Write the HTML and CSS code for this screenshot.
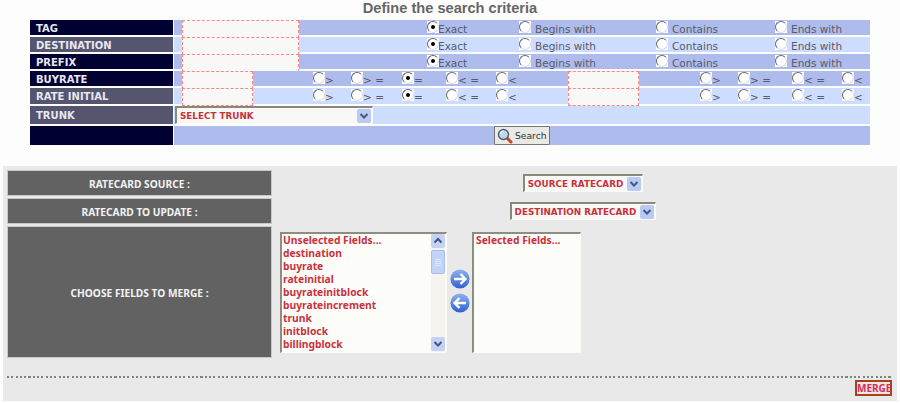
FILE: index.html
```html
<!DOCTYPE html>
<html lang="en">
<head>
<meta charset="utf-8">
<title>Define the search criteria</title>
<link rel="stylesheet" href="styles.css">
</head>
<body>
<h1 class="title">Define the search criteria</h1>
<div class="search">
  <div class="lab dark">TAG</div>
  <div class="val blue text-row">
    <input class="field wide" type="text">
    <label class="opt tight"><span class="radio on"></span>Exact</label>
    <label class="opt"><span class="radio"></span>Begins with</label>
    <label class="opt"><span class="radio"></span>Contains</label>
    <label class="opt"><span class="radio"></span>Ends with</label>
  </div>
  <div class="lab mid">DESTINATION</div>
  <div class="val pale text-row">
    <input class="field wide" type="text">
    <label class="opt tight"><span class="radio on"></span>Exact</label>
    <label class="opt"><span class="radio"></span>Begins with</label>
    <label class="opt"><span class="radio"></span>Contains</label>
    <label class="opt"><span class="radio"></span>Ends with</label>
  </div>
  <div class="lab dark">PREFIX</div>
  <div class="val blue text-row">
    <input class="field wide" type="text">
    <label class="opt tight"><span class="radio on"></span>Exact</label>
    <label class="opt"><span class="radio"></span>Begins with</label>
    <label class="opt"><span class="radio"></span>Contains</label>
    <label class="opt"><span class="radio"></span>Ends with</label>
  </div>
  <div class="lab dark">BUYRATE</div>
  <div class="val blue rate-row">
    <input class="field short" type="text">
    <label class="opt cmp"><span class="radio"></span>&gt;</label>
    <label class="opt cmp"><span class="radio"></span>&gt; =</label>
    <label class="opt cmp"><span class="radio on"></span>=</label>
    <label class="opt cmp"><span class="radio"></span>&lt; =</label>
    <label class="opt cmp"><span class="radio"></span>&lt;</label>
    <input class="field short" type="text">
    <label class="opt cmp"><span class="radio"></span>&gt;</label>
    <label class="opt cmp"><span class="radio"></span>&gt; =</label>
    <label class="opt cmp"><span class="radio"></span>&lt; =</label>
    <label class="opt cmp"><span class="radio"></span>&lt;</label>
  </div>
  <div class="lab mid">RATE INITIAL</div>
  <div class="val pale rate-row">
    <input class="field short" type="text">
    <label class="opt cmp"><span class="radio"></span>&gt;</label>
    <label class="opt cmp"><span class="radio"></span>&gt; =</label>
    <label class="opt cmp"><span class="radio on"></span>=</label>
    <label class="opt cmp"><span class="radio"></span>&lt; =</label>
    <label class="opt cmp"><span class="radio"></span>&lt;</label>
    <input class="field short" type="text">
    <label class="opt cmp"><span class="radio"></span>&gt;</label>
    <label class="opt cmp"><span class="radio"></span>&gt; =</label>
    <label class="opt cmp"><span class="radio"></span>&lt; =</label>
    <label class="opt cmp"><span class="radio"></span>&lt;</label>
  </div>
  <div class="lab mid">TRUNK</div>
  <div class="val pale trunk-row">
    <div class="select trunk"><span>SELECT TRUNK</span>
      <svg class="drop" viewBox="0 0 14 14"><rect width="14" height="14" rx="2" fill="#b9caf3"/><path d="M3.5 5 7 8.5 10.5 5" fill="none" stroke="#47577f" stroke-width="2"/></svg>
    </div>
  </div>
  <div class="lab dark"></div>
  <div class="val blue action-row">
    <button class="search-btn" type="button">
      <svg class="lens" viewBox="0 0 16 16"><path d="M9.5 9.5 14 14" stroke="#c8481c" stroke-width="3" stroke-linecap="round"/><circle cx="6.5" cy="6.5" r="5" fill="#bcd8ee" stroke="#4c5c68" stroke-width="1.4"/><path d="M3.5 6a3 3 0 0 1 3-3" fill="none" stroke="#fff" stroke-width="1.2"/></svg>
      Search
    </button>
  </div>
</div>

<div class="merge-panel">
  <div class="merge-grid">
    <div class="side">RATECARD SOURCE :</div>
    <div class="pick">
      <div class="select"><span>SOURCE RATECARD</span>
        <svg class="drop" viewBox="0 0 14 14"><rect width="14" height="14" rx="2" fill="#b9caf3"/><path d="M3.5 5 7 8.5 10.5 5" fill="none" stroke="#47577f" stroke-width="2"/></svg>
      </div>
    </div>
    <div class="side">RATECARD TO UPDATE :</div>
    <div class="pick">
      <div class="select"><span>DESTINATION RATECARD</span>
        <svg class="drop" viewBox="0 0 14 14"><rect width="14" height="14" rx="2" fill="#b9caf3"/><path d="M3.5 5 7 8.5 10.5 5" fill="none" stroke="#47577f" stroke-width="2"/></svg>
      </div>
    </div>
    <div class="side">CHOOSE FIELDS TO MERGE :</div>
    <div class="fields">
      <div class="list unselected">
        <ul class="items">
          <li>Unselected Fields...</li>
          <li>destination</li>
          <li>buyrate</li>
          <li>rateinitial</li>
          <li>buyrateinitblock</li>
          <li>buyrateincrement</li>
          <li>trunk</li>
          <li>initblock</li>
          <li>billingblock</li>
        </ul>
        <div class="scrollbar">
          <svg class="sb-btn" viewBox="0 0 14 14"><rect width="14" height="14" rx="2" fill="#c3d3f8"/><path d="M3.5 8.5 7 5l3.5 3.5" fill="none" stroke="#46567e" stroke-width="2"/></svg>
          <div class="thumb"><span class="grip"></span></div>
          <svg class="sb-btn end" viewBox="0 0 14 14"><rect width="14" height="14" rx="2" fill="#c3d3f8"/><path d="M3.5 5 7 8.5 10.5 5" fill="none" stroke="#46567e" stroke-width="2"/></svg>
        </div>
      </div>
      <div class="movers">
        <svg class="mover" viewBox="0 0 20 20"><defs><linearGradient id="mv" x1="0" y1="0" x2="0" y2="1"><stop offset="0" stop-color="#8fb2ee"/><stop offset="1" stop-color="#2f62cf"/></linearGradient></defs><circle cx="10" cy="10" r="9.6" fill="url(#mv)"/><path d="M4 10h11M10.5 5l5 5-5 5" fill="none" stroke="#fff" stroke-width="2.4"/></svg>
        <svg class="mover" viewBox="0 0 20 20"><circle cx="10" cy="10" r="9.6" fill="url(#mv)"/><path d="M16 10H5M9.5 5l-5 5 5 5" fill="none" stroke="#fff" stroke-width="2.4"/></svg>
      </div>
      <div class="list selected">
        <ul class="items"><li>Selected Fields...</li></ul>
      </div>
    </div>
  </div>
  <div class="dots"></div>
  <div class="actions"><a class="merge" href="#">MERGE</a></div>
</div>
</body>
</html>
```
FILE: styles.css
```css
* { box-sizing: border-box; }
html, body { margin: 0; padding: 0; }
body {
  width: 900px;
  height: 403px;
  overflow: hidden;
  background: #fdfdfd;
  font-family: "DejaVu Sans", sans-serif;
}
.title {
  margin: 0;
  height: 20px;
  text-align: center;
  font: bold 14.6px/16px "Liberation Sans", sans-serif;
  color: #666;
}
.search {
  width: 840px;
  margin-left: 30px;
  display: grid;
  grid-template-columns: 143px 1fr;
  grid-template-rows: 15px 15px 15px 15px 16px 18px 19px;
  gap: 2px 1px;
}
.lab {
  padding: 1px 0 0 6px;
  display: flex;
  align-items: center;
  font-size: 10px;
  font-weight: bold;
  color: #e8e8f0;
  white-space: nowrap;
}
.dark { background: #000033; }
.mid { background: #555570; }
.val { font-size: 10.5px; color: #5a5a68; min-width: 0; }
.blue { background: #adbcec; }
.pale { background: #ccddff; }
.text-row, .rate-row { display: grid; padding-left: 8px; }
.text-row { grid-template-columns: 245px 92px 137px 119px 1fr; }
.rate-row { grid-template-columns: 131px 38px 51px 44px 50px 72px 132px 38px 54px 50px 1fr; }
.field {
  display: block;
  height: 100%;
  margin: 0;
  padding: 0;
  background: #f8f9f6;
  border: 1px dashed #ff8484;
  outline: 0;
}
.wide { width: 117px; }
.short { width: 71px; }
.opt {
  display: flex;
  align-items: flex-start;
  height: 100%;
  line-height: 18px;
  white-space: nowrap;
}
.radio {
  flex: none;
  position: relative;
  width: 12px;
  height: 12px;
  margin: 1px 4px 0 0;
  background: #fff;
}
.tight .radio { margin-right: -1px; }
.cmp .radio { margin-right: 0; }
.radio::before {
  content: "";
  position: absolute;
  inset: 0;
  border: 1.5px solid;
  border-color: #666 #ddd #ddd #666;
  border-radius: 50%;
}
.radio.on::after {
  content: "";
  position: absolute;
  left: 4px;
  top: 4px;
  width: 4px;
  height: 4px;
  background: #000;
  border-radius: 50%;
}
.select {
  display: inline-flex;
  align-items: center;
  justify-content: space-between;
  gap: 4px;
  height: 18px;
  padding: 0 1px 0 3px;
  background: #f8f9f6;
  border: solid #fbfbf8;
  border-width: 0 1px 1px 0;
  border-top: 2px solid #8a887a;
  border-left: 2px solid #8a887a;
  font-size: 8.8px;
  font-weight: bold;
  color: #c8323c;
  white-space: nowrap;
}
.drop { width: 14px; height: 14px; flex: none; }
.trunk-row { padding-left: 1px; }
.trunk { display: flex; width: 198px; height: 18px; }
.action-row { display: flex; justify-content: center; }
.search-btn {
  display: flex;
  align-items: center;
  gap: 2px;
  width: 56px;
  height: 19px;
  padding: 0 0 0 2px;
  background: #e9e9e6;
  border: 1px solid #777;
  border-radius: 1px;
  font: 9.2px "DejaVu Sans", sans-serif;
  color: #333;
}
.lens { width: 16px; height: 16px; flex: none; }
.merge-panel {
  width: 894px;
  height: 235px;
  margin: 21px 0 0 3px;
  padding: 4px 5px 0 4px;
  background: #e9e9e9;
}
.merge-grid {
  display: grid;
  grid-template-columns: 265px 1fr;
  grid-template-rows: 26px 26px 132px;
  gap: 2px;
}
.side {
  display: flex;
  align-items: center;
  justify-content: center;
  padding-top: 1px;
  background: #626262;
  border: 1px solid #c8c8c8;
  font: bold 10.2px "Noto Sans", sans-serif;
  color: #f2f2f2;
}
.pick { display: flex; align-items: flex-start; justify-content: center; padding-top: 4px; }
.fields { display: flex; align-items: flex-start; padding: 6px 0 0 6px; }
.list {
  display: flex;
  height: 121px;
  background: #fcfdf9;
  border: solid #fbfbf8;
  border-width: 0 1px 1px 0;
  border-top: 2px solid #8f8d7f;
  border-left: 2px solid #8f8d7f;
}
.unselected { width: 167px; }
.selected { width: 109px; }
.selected .items { padding-left: 2px; }
.items {
  flex: 1;
  margin: 0;
  padding: 0 0 0 1px;
  list-style: none;
  font: bold 10.3px/13px "Noto Sans", sans-serif;
  color: #c8323c;
  white-space: nowrap;
}
.scrollbar {
  width: 14px;
  margin-right: 1px;
  padding-bottom: 1px;
  display: flex;
  flex-direction: column;
  background: #f5f4ee;
}
.sb-btn { width: 14px; height: 14px; flex: none; }
.sb-btn.end { margin-top: auto; }
.thumb {
  height: 24px;
  margin-top: 2px;
  display: flex;
  align-items: center;
  justify-content: center;
  background: #c3d3f8;
  border: 1px solid #a9bdee;
  border-radius: 2px;
}
.grip {
  width: 6px;
  height: 7px;
  background: repeating-linear-gradient(#dfe8fc 0 1px, transparent 1px 2px);
}
.movers {
  width: 25px;
  height: 119px;
  display: flex;
  flex-direction: column;
  align-items: center;
  gap: 4px;
  padding-top: 37px;
}
.mover { width: 20px; height: 20px; }
.dots {
  margin-top: 18px;
  height: 2px;
  background: repeating-linear-gradient(90deg, #7a887a 0 2px, transparent 2px 4.3px);
}
.actions { display: flex; justify-content: flex-end; margin-top: 2px; }
.merge {
  display: block;
  width: 37px;
  height: 16px;
  text-align: center;
  background: #f2e6e6;
  border: 2px solid #a8401c;
  font: bold 10px/12px "Noto Sans", sans-serif;
  color: #d0305c;
  text-decoration: none;
}
```
